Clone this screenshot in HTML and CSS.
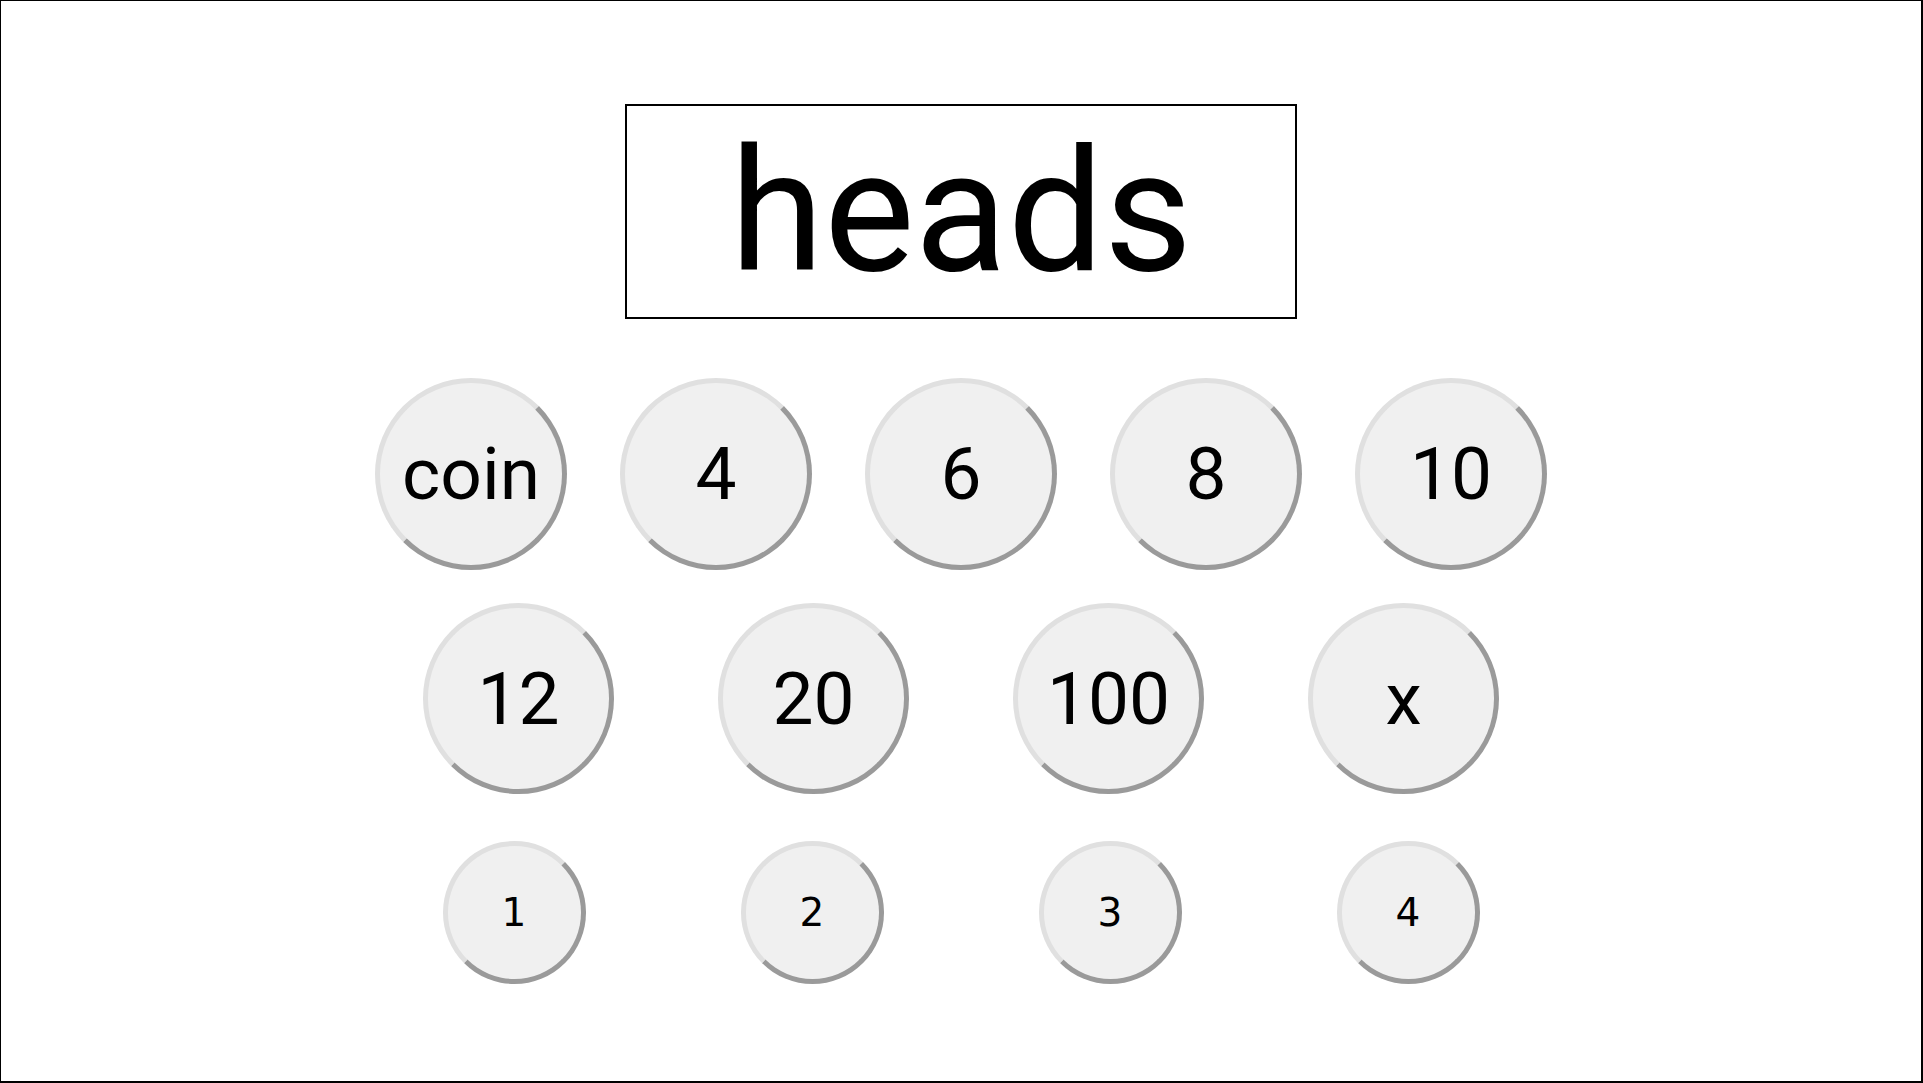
FILE: index.html
```html
<!DOCTYPE html>
<html lang="en">
<head>
<meta charset="utf-8">
<title>Dice</title>
<link rel="stylesheet" href="styles.css">
</head>
<body>
<div class="frame">
  <div class="display">heads</div>
  <div class="row row-big">
    <button class="die big">coin</button>
    <button class="die big">4</button>
    <button class="die big">6</button>
    <button class="die big">8</button>
    <button class="die big">10</button>
  </div>
  <div class="row row-mid">
    <button class="die big">12</button>
    <button class="die big">20</button>
    <button class="die big">100</button>
    <button class="die big">x</button>
  </div>
  <div class="row row-small">
    <button class="die small">1</button>
    <button class="die small">2</button>
    <button class="die small">3</button>
    <button class="die small">4</button>
  </div>
</div>
</body>
</html>
```
FILE: styles.css
```css
html, body {
  margin: 0;
  padding: 0;
  background: #ffffff;
}

.frame {
  box-sizing: border-box;
  height: 100vh;
  border-top: 1px solid #000;
  border-left: 1px solid #000;
  border-right: 2px solid #000;
  border-bottom: 2px solid #000;
  display: flex;
  flex-direction: column;
  align-items: center;
}

.display {
  box-sizing: border-box;
  width: 672px;
  height: 215px;
  margin-top: 103px;
  border: 2px solid #000;
  display: flex;
  align-items: center;
  justify-content: center;
  font-family: Roboto, "Noto Sans", sans-serif;
  font-size: 171px;
  color: #000;
}

.row {
  display: flex;
  justify-content: center;
}

.row-big { margin-top: 59px; gap: 53px; }
.row-mid { margin-top: 33px; gap: 104px; }
.row-small { margin-top: 47px; gap: 155px; }

.die {
  box-sizing: border-box;
  border-radius: 50%;
  border-style: solid;
  border-width: 5px;
  border-color: #e0e0e0 #9a9a9a #9a9a9a #e0e0e0;
  background: #f0f0f0;
  color: #000;
  padding: 0;
  display: flex;
  align-items: center;
  justify-content: center;
}

.big {
  width: 192px;
  height: 192px;
  font-family: Roboto, "Noto Sans", sans-serif;
  font-size: 73px;
}

.row-mid .big {
  width: 191px;
  height: 191px;
}

.small {
  width: 143px;
  height: 143px;
  font-family: "DejaVu Sans", sans-serif;
  font-size: 39px;
}
```
